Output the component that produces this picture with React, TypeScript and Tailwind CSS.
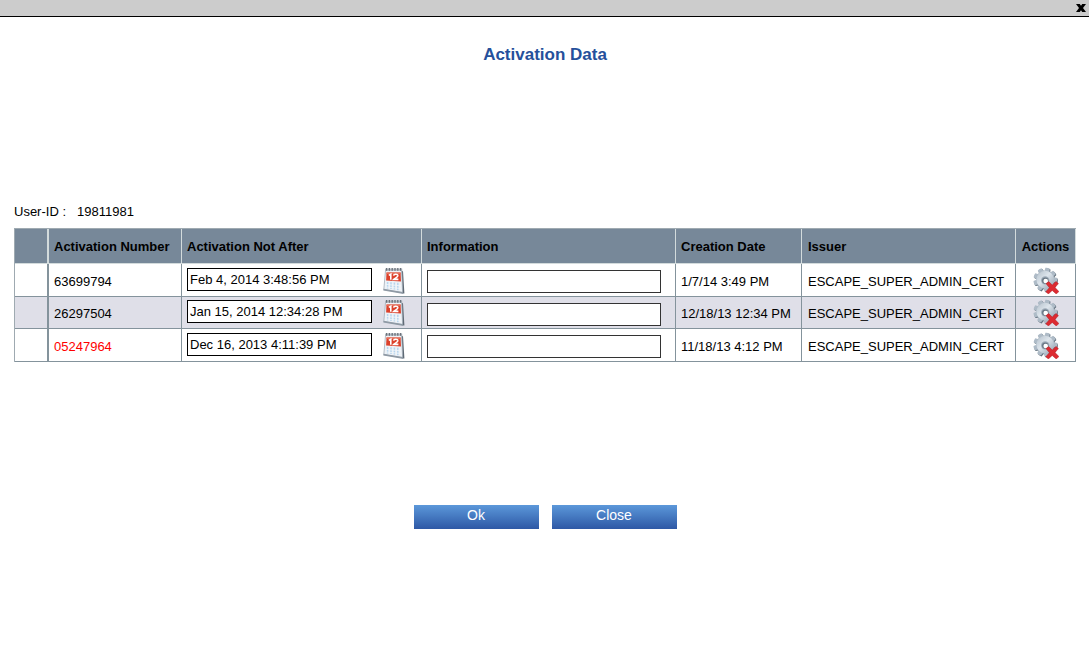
import React from "react";

type Activation = {
  number: string;
  notAfter: string;
  created: string;
  issuer: string;
  expired?: boolean;
};

const activations: Activation[] = [
  { number: "63699794", notAfter: "Feb 4, 2014 3:48:56 PM", created: "1/7/14 3:49 PM", issuer: "ESCAPE_SUPER_ADMIN_CERT" },
  { number: "26297504", notAfter: "Jan 15, 2014 12:34:28 PM", created: "12/18/13 12:34 PM", issuer: "ESCAPE_SUPER_ADMIN_CERT" },
  { number: "05247964", notAfter: "Dec 16, 2013 4:11:39 PM", created: "11/18/13 4:12 PM", issuer: "ESCAPE_SUPER_ADMIN_CERT", expired: true },
];

const teeth = [0, 40, 80, 120, 160, 200, 240, 280, 320];

function CalendarIcon() {
  return (
    <svg width="22" height="27" viewBox="0 0 22 27" aria-hidden="true">
      <path d="M18 3 L20 4.5 L21.4 26.6 L18 26 Z" fill="#5f6a75" />
      <path d="M2.6 2.5 H18.6 L19.6 25.8 L0.8 22.6 Z" fill="#eef2f7" stroke="#a3adb7" strokeWidth="0.8" />
      <path d="M0.5 21.8 L19.8 25 L20.6 26.9 L0.3 23.6 Z" fill="#8f9aa5" />
      <path d="M2.4 1.4 H19.2 V3.8 H2.2 Z" fill="#b4bbc2" />
      <path d="M3.6 1 V3.8 M6.4 1 V3.8 M9.2 1 V3.8 M12 1 V3.8 M14.8 1 V3.8 M17.6 1 V3.8" stroke="#6a727b" strokeWidth="1.3" />
      <path d="M3.5 5.4 H17.6 L18 14.6 L3.1 13.6 Z" fill="#dc412b" />
      <path d="M3.5 5.4 H17.6 V7 H3.4 Z" fill="#e66f59" />
      <path d="M5.8 8.4 L7.8 7.2 V12.8 M10.6 8.6 C10.8 6.7 15 6.7 14.8 8.9 C14.6 10.2 12 11.2 10.8 12.4 H15.4" fill="none" stroke="#fff" strokeWidth="1.6" />
      <path d="M4.6 15 V21.5 M8 15.3 V22 M11.4 15.6 V22.6 M14.8 15.8 V23.2" stroke="#b7d5ee" strokeWidth="1.5" />
      <path d="M3 17.4 L18 18.8 M3 20 L18 21.5" stroke="#f4f7fa" strokeWidth="0.8" />
    </svg>
  );
}

function GearDeleteIcon() {
  return (
    <svg width="26" height="27" viewBox="0 0 26 27" aria-hidden="true">
      <defs>
        <linearGradient id="metal" x1="0" y1="0" x2="1" y2="1">
          <stop offset="0" stopColor="#b4c0cb" />
          <stop offset="0.45" stopColor="#dde5ec" />
          <stop offset="1" stopColor="#93a2b0" />
        </linearGradient>
      </defs>
      {[0, 1].map((layer) => (
        <g key={layer} transform={layer === 0 ? "translate(12.9 13.4)" : "translate(12.2 12.6)"} fill={layer === 0 ? "#5f6e7b" : "#aebbc7"}>
          {teeth.map((angle) => (
            <path key={angle} transform={`rotate(${angle + 12})`} d="M-2.7 -7 L-2.2 -11.6 Q0 -12.3 2.2 -11.6 L2.7 -7 Z" />
          ))}
          <circle r="9.2" />
        </g>
      ))}
      <circle cx="12.2" cy="12.6" r="8.8" fill="url(#metal)" />
      <circle cx="12.2" cy="13.4" r="4.2" fill="#9eacb9" />
      <circle cx="12.2" cy="13.6" r="3.2" fill="#6b7986" />
      <circle cx="12.7" cy="14" r="2.3" fill="#fff" />
      <path d="M13 16.6 L15.8 14.6 L19.2 18.1 L23 14.4 L25.4 16.6 L22 20.5 L25.9 24.6 L23.2 26.9 L19.2 23.4 L15.4 26.9 L12.8 24.8 L16.4 20.7 Z" fill="#dc2b31" stroke="#b51c24" strokeWidth="0.5" />
    </svg>
  );
}

export default function App() {
  const head = "border-r border-b border-[#d3dbdc] px-[5px] pt-[2px] text-left font-bold";
  const inputCell = "border-r border-b border-[#84939c] px-[5px]";
  const textCell = "border-r border-b border-[#84939c] px-[5px] pt-[3px] whitespace-nowrap";
  const button = "h-6 w-[125px] bg-linear-to-b from-[#5c98da] to-[#2e58a5] pb-1 text-white";
  return (
    <div className="min-h-screen bg-white font-['Liberation_Sans',Arial,sans-serif] text-[13px] leading-4 text-black">
      <header className="flex h-[17px] items-center justify-end border-b border-black bg-[#cccccc] pr-[3px]">
        <button type="button" aria-label="Close dialog" className="flex">
          <svg width="10" height="10" viewBox="0 0 10 10" aria-hidden="true">
            <path d="M0 1 H3.8 L5 2.8 L6.2 1 H10 L7 5 L10 9 H6.2 L5 7.2 L3.8 9 H0 L3 5 Z" fill="#000" />
          </svg>
        </button>
      </header>
      <main className="pr-[13px] pl-[14px]">
        <h1 className="pt-7 text-center text-[17px] leading-5 font-bold text-[#25509b]">Activation Data</h1>
        <dl className="mt-[139px] flex gap-[11px]">
          <dt>User-ID :</dt>
          <dd>19811981</dd>
        </dl>
        <table className="mt-2 w-full table-fixed border-separate border-spacing-0 border-t border-l border-[#9faab1]">
          <colgroup>
            <col className="w-[34px]" />
            <col className="w-[133px]" />
            <col className="w-[240px]" />
            <col />
            <col className="w-[126px]" />
            <col className="w-[214px]" />
            <col className="w-[60px]" />
          </colgroup>
          <thead className="bg-[#778899]">
            <tr className="h-[35px]">
              <td className="border-r-2 border-b border-[#d3dbdc]" />
              <th scope="col" className={head}>Activation Number</th>
              <th scope="col" className={head}>Activation Not After</th>
              <th scope="col" className={head}>Information</th>
              <th scope="col" className={head}>Creation Date</th>
              <th scope="col" className="border-r border-b border-[#d3dbdc] pt-[2px] pl-[6px] text-left font-bold">Issuer</th>
              <th scope="col" className="border-r border-b border-[#d3dbdc] pt-[2px] text-center font-bold">Actions</th>
            </tr>
          </thead>
          <tbody>
            {activations.map((row) => (
              <tr key={row.number} className="h-[33px] even:h-8 even:bg-[#dfdfe8]">
                <td className="border-r-2 border-b border-[#84939c]" />
                <td className={textCell}>
                  <span className={row.expired ? "text-[#ff0000]" : "text-black"}>{row.number}</span>
                </td>
                <td className={inputCell}>
                  <div className="flex items-start gap-[11px]">
                    <input
                      type="text"
                      aria-label={`Activation not after, ${row.number}`}
                      defaultValue={row.notAfter}
                      className="mt-px h-[23px] w-[185px] border border-black bg-white px-[2px]"
                    />
                    <button type="button" aria-label={`Pick date, ${row.number}`}>
                      <CalendarIcon />
                    </button>
                  </div>
                </td>
                <td className={inputCell}>
                  <input
                    type="text"
                    aria-label={`Information, ${row.number}`}
                    className="mt-[3px] block h-[23px] w-[234px] border border-[#333333] bg-white px-[2px]"
                  />
                </td>
                <td className={textCell}>{row.created}</td>
                <td className="border-r border-b border-[#84939c] pt-[3px] pl-[6px] whitespace-nowrap">{row.issuer}</td>
                <td className="border-r border-b border-[#84939c]">
                  <button type="button" aria-label={`Delete activation ${row.number}`} className="mx-auto block pl-px">
                    <GearDeleteIcon />
                  </button>
                </td>
              </tr>
            ))}
          </tbody>
        </table>
        <div className="mt-[143px] flex justify-center gap-[13px] text-[14px]">
          <button type="button" className={button}>
            Ok
          </button>
          <button type="button" className={button}>
            Close
          </button>
        </div>
      </main>
    </div>
  );
}
